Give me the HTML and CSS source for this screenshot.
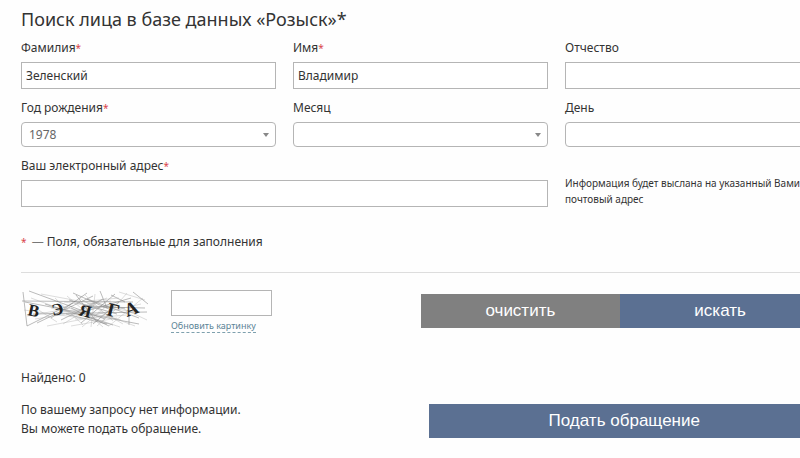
FILE: index.html
```html
<!DOCTYPE html>
<html lang="ru">
<head>
  <meta charset="UTF-8" />
  <meta name="viewport" content="width=device-width, initial-scale=1.0"/>
  <title>Поиск лица в базе данных «Розыск»</title>
  <link rel="stylesheet" href="styles.css">
</head>
<body>

<main class="page">
  <h1 class="title">Поиск лица в базе данных «Розыск»*</h1>

  <form>
    <div class="fields">
      <div class="field">
        <label for="surname">Фамилия<span class="req">*</span></label>
        <input type="text" id="surname" value="Зеленский" />
      </div>
      <div class="field">
        <label for="firstName">Имя<span class="req">*</span></label>
        <input type="text" id="firstName" value="Владимир" />
      </div>
      <div class="field">
        <label for="patronymic">Отчество</label>
        <input type="text" id="patronymic" />
      </div>

      <div class="field">
        <label for="year">Год рождения<span class="req">*</span></label>
        <div class="select">
          <select id="year"><option>1978</option></select>
        </div>
      </div>
      <div class="field">
        <label for="month">Месяц</label>
        <div class="select">
          <select id="month"><option></option></select>
        </div>
      </div>
      <div class="field">
        <label for="day">День</label>
        <div class="select">
          <select id="day"><option></option></select>
        </div>
      </div>

      <div class="field wide">
        <label for="email">Ваш электронный адрес<span class="req">*</span></label>
        <input type="email" id="email" />
      </div>
      <p class="hint">Информация будет выслана на указанный Вами почтовый адрес</p>
    </div>

    <p class="note"><span class="req">*</span> <span class="dash">—</span> Поля, обязательные для заполнения</p>

    <div class="actions">
      <!-- captcha -->
      <svg class="captcha" viewBox="0 0 130 40" role="img" aria-label="Код с картинки">
        <g fill="none" stroke="#777" stroke-width="0.5">
          <path d="M2 2L6 36M1 11L112 12M6 36L52 13M8 1L84 29M4 12L118 34M12 24L126 22M16 33L72 6M24 14L92 35M30 28L66 3"/>
          <path d="M108 16V35M82 17L124 18M70 16L104 18M40 30L82 9M48 10L96 24M50 18L88 36M55 5L76 32M60 33L94 4"/>
          <path d="M79 1L86 18M62 22L110 8M66 9L118 28M72 34L98 12M45 24L86 34M90 5L104 12M112 2L127 14M52 3L90 20"/>
        </g>
        <g fill="none" stroke="#aaa" stroke-width="0.4">
          <path d="M3 20L60 28M10 8L48 22M14 29L70 20M20 4L74 14M26 36L84 25M34 8L62 35M38 16L100 30M42 34L78 12"/>
          <path d="M46 6L82 37M54 29L106 25M57 12L98 8M61 37L88 14M64 5L92 31M68 26L120 14M74 4L70 37M77 22L114 36"/>
          <path d="M80 33L106 3M84 10L126 30M35 23L94 15M43 12L116 22M50 36L96 28M58 8L102 34M88 36L122 8M30 18L78 30"/>
          <path d="M66 14L90 11M60 18L86 8M72 28L99 37M76 36L94 20M52 25L74 18M10 15L36 32M98 2L124 10M6 26L40 20"/>
        </g>
        <g class="captcha-text">
          <text transform="translate(6 25) rotate(12)">В</text>
          <text transform="translate(32 26) rotate(-12)">Э</text>
          <text transform="translate(57 25) rotate(14)">Я</text>
          <text class="big" transform="translate(85 25) rotate(14)">Г</text>
          <text class="big" transform="translate(106 27) rotate(-20)">А</text>
        </g>
      </svg>

      <div class="code">
        <input type="text" id="code" aria-label="Код с картинки" />
        <a href="#">Обновить картинку</a>
      </div>

      <div class="buttons">
        <button type="reset" class="clear">очистить</button>
        <button type="submit">искать</button>
      </div>
    </div>
  </form>

  <p class="found">Найдено: 0</p>

  <div class="result">
    <p>По вашему запросу нет информации.<br>Вы можете подать обращение.</p>
    <button type="button">Подать обращение</button>
  </div>
</main>

</body>
</html>
```

FILE: styles.css
```css
* {
  box-sizing: border-box;
}

body {
  margin: 0;
  background-color: #fefefe;
  color: #333;
  font-family: "Noto Sans", sans-serif;
  font-size: 12px;
  line-height: 20px;
  overflow-x: hidden;
}

p {
  margin: 0;
}

/* the form runs past the right edge of the window */
.page {
  margin: 0 -20px 0 21px;
  padding-top: 5px;
}

.title {
  margin: 0 0 5px;
  font-size: 18px;
  font-weight: normal;
  line-height: 28px;
}

.fields {
  display: grid;
  grid-template-columns: repeat(3, 1fr);
  gap: 9px 17px;
}

.field label {
  display: block;
  margin-bottom: 4px;
}

.wide {
  grid-column: span 2;
}

.req {
  color: #d9444a;
  font-size: 10px;
  line-height: 1;
}

input,
select {
  display: block;
  width: 100%;
  height: 27px;
  padding: 0 4px;
  border: 1px solid #b5b5b5;
  border-radius: 0;
  background-color: #fff;
  color: #333;
  font: inherit;
}

.select {
  position: relative;
}

.select select {
  height: 25px;
  padding: 0 7px;
  border-radius: 4px;
  color: #666;
  appearance: none;
}

.select::after {
  content: "";
  position: absolute;
  top: 11px;
  right: 7px;
  border: 3px solid transparent;
  border-top: 4px solid #888;
  border-bottom: 0;
  pointer-events: none;
}

.hint {
  align-self: end;
  font-size: 10px;
  line-height: 16px;
}

.note {
  padding: 25px 0 20px;
  border-bottom: 1px solid #ddd;
}

.dash {
  margin-left: 2px;
  color: #777;
}

.actions {
  display: flex;
  align-items: flex-start;
  padding-top: 17px;
}

.captcha {
  width: 130px;
  height: 40px;
}

.captcha-text {
  fill: #222;
  font-family: "Liberation Serif", serif;
  font-size: 17px;
  font-weight: bold;
}

.captcha-text .big {
  font-size: 19px;
}

.code {
  width: 101px;
  margin-left: 20px;
}

.code input {
  height: 26px;
}

.code a {
  display: block;
  width: max-content;
  margin-top: 3px;
  border-bottom: 1px dashed #7ea0ae;
  color: #5b8496;
  font-size: 9px;
  line-height: 13px;
  text-decoration: none;
}

button {
  height: 34px;
  padding: 0;
  border: 0;
  background-color: #5b7092;
  color: #fff;
  font-family: "Liberation Sans", Arial, sans-serif;
  font-size: 17px;
  cursor: pointer;
}

.buttons {
  display: flex;
  width: 50%;
  margin: 4px 0 0 auto;
}

.buttons button {
  flex: 1;
}

.buttons .clear {
  background-color: #808080;
}

.found {
  margin-top: 35px;
}

.result {
  display: flex;
  justify-content: space-between;
  align-items: flex-end;
  margin-top: 12px;
  line-height: 19px;
}

.result button {
  width: 49%;
}
```
